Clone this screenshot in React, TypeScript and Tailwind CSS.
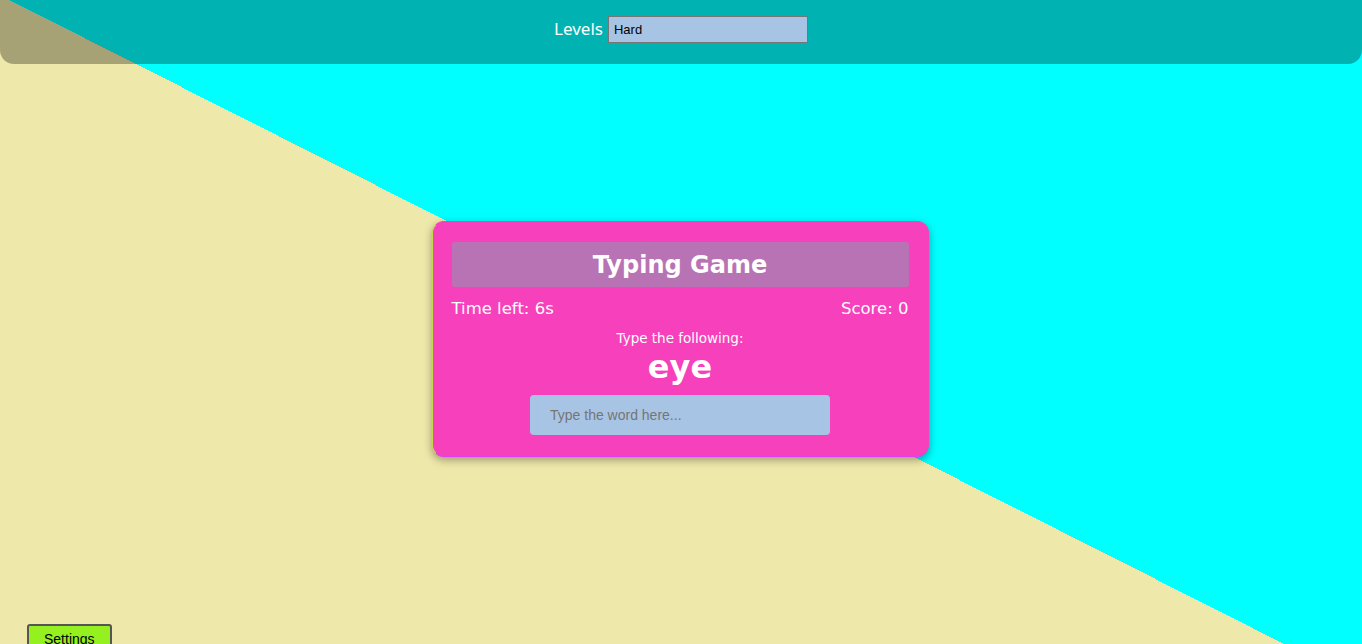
import React from "react";

const App: React.FC = () => {
    return (
        <div className="h-[644px] overflow-hidden bg-[linear-gradient(206.8deg,#00ffff_51.3%,#eee8aa_51.3%)] font-['DejaVu_Sans',sans-serif]">
            <header className="flex h-16 items-start justify-center gap-[5px] rounded-b-[14px] bg-black/30 pt-4">
                <span className="mt-[1px] font-['Noto_Sans',sans-serif] text-[17px] leading-[24px] text-white">Levels</span>
                <select
                    defaultValue="hard"
                    className="h-[27px] w-[200px] appearance-none border border-[#767676] bg-[#a8c4e4] pl-[5px] font-['Liberation_Sans',Arial,sans-serif] text-[13px] text-black outline-none"
                >
                    <option value="easy">Easy</option>
                    <option value="medium">Medium</option>
                    <option value="hard">Hard</option>
                </select>
            </header>

            <div className="mx-auto mt-[157px] w-[497px] -translate-x-px rounded-xl border border-[#f740bb] border-b-[#e23ef0] border-l-[#c6d84a] bg-[#f740bb] px-[19px] pb-[21px] pt-5 shadow-[0_3px_8px_rgba(0,0,0,0.35)]">
                <h1 className="h-[45px] rounded-[3px] bg-[#b873b5] text-center text-[24px] font-bold leading-[46px] text-white">
                    Typing Game
                </h1>
                <div className="mt-[12px] flex justify-between text-[16.5px] leading-[20px] text-white">
                    <span>Time left: 6s</span>
                    <span>Score: 0</span>
                </div>
                <p className="mt-[11px] text-center text-[13.5px] font-medium leading-[16px] text-white">Type the following:</p>
                <p className="mt-[1px] text-center text-[32px] font-bold leading-[40px] text-white">eye</p>
                <input
                    type="text"
                    placeholder="Type the word here..."
                    className="mx-auto mt-2 block h-10 w-[300px] rounded-[4px] bg-[#a8c4e4] px-5 font-['Liberation_Sans',Arial,sans-serif] text-[14px] text-black outline-none placeholder:text-[#757575]"
                />
            </div>

            <button className="ml-[27px] mt-[167px] h-[28px] rounded-[3px] border-2 border-[#555] bg-[#94f01e] px-[15px] pt-[2px] font-['Liberation_Sans',Arial,sans-serif] text-[14px] leading-[22px] text-black">
                Settings
            </button>
        </div>
    );
};

export default App;
